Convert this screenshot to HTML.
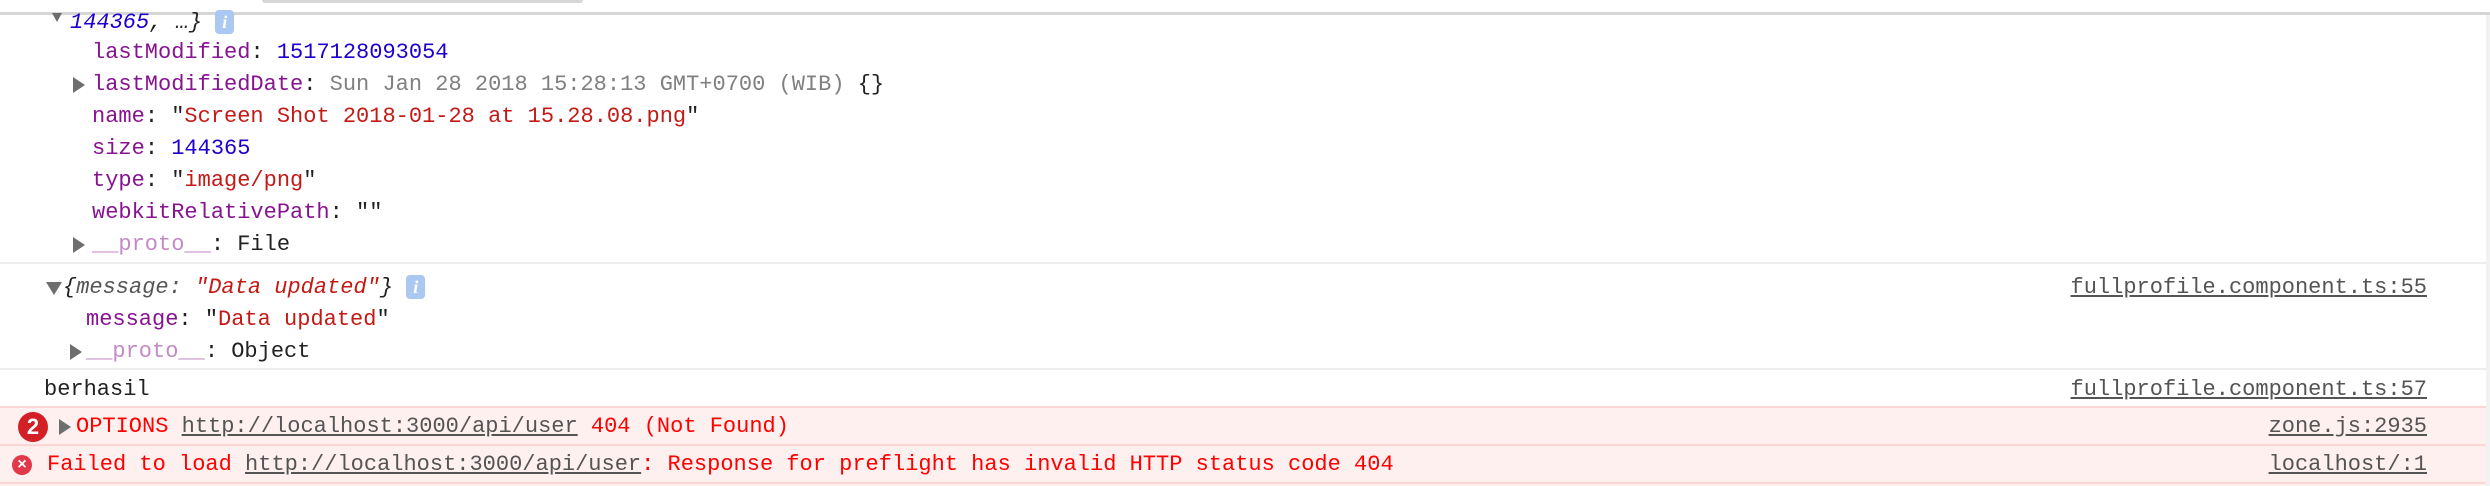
<!DOCTYPE html>
<html><head><meta charset="utf-8"><style>
body{margin:0;width:2490px;height:486px;background:#fff;position:relative;overflow:hidden;font-family:"Liberation Mono",monospace;font-size:22px;color:#222}
.l{position:absolute;white-space:pre;line-height:32px;height:32px}
.p{color:#881391}.n{color:#1c00cf}.s{color:#c41a16}.g{color:#808080}.pp{color:#c38bc6}
.r{color:#f00}
.u{text-decoration:underline;color:#545454}
.car{position:absolute;width:0;height:0;border-top:8px solid transparent;border-bottom:8px solid transparent;border-left:12px solid #6e6e6e}
.cd{position:absolute;width:0;height:0;border-left:8px solid transparent;border-right:8px solid transparent;border-top:13px solid #6e6e6e}
.info{display:inline-block;width:19px;height:24px;background:#abc8f3;border-radius:4px;color:#fff;font-style:italic;font-size:18px;line-height:24px;text-align:center;vertical-align:middle;font-family:"Liberation Serif",serif;font-weight:bold}
.sep{position:absolute;left:0;width:2486px;height:2px;background:#eeeeee}
.rt{position:absolute;right:63px;white-space:pre;line-height:32px}
</style></head><body>
<div style="position:absolute;left:0;top:12px;width:2490px;height:3px;background:#d6d6d6"></div>
<div style="position:absolute;left:262px;top:0;width:321px;height:3px;background:#d6d6d6;border-radius:0 0 3px 3px"></div>
<div style="position:absolute;left:2486px;top:15px;width:4px;height:471px;background:#f2f2f2"></div>

<div class="cd" style="left:52px;top:13px;border-left-width:5px;border-right-width:5px;border-top-width:9px"></div>
<div class="l" style="left:70px;top:7px"><i class="n">144365</i><i>, …}</i> <span class="info">i</span></div>
<div class="l" style="left:92px;top:37px"><span class="p">lastModified</span>: <span class="n">1517128093054</span></div>
<div class="car" style="left:73px;top:77px"></div>
<div class="l" style="left:92px;top:69px"><span class="p">lastModifiedDate</span>: <span class="g">Sun Jan 28 2018 15:28:13 GMT+0700 (WIB)</span> {}</div>
<div class="l" style="left:92px;top:101px"><span class="p">name</span>: "<span class="s">Screen Shot 2018-01-28 at 15.28.08.png</span>"</div>
<div class="l" style="left:92px;top:133px"><span class="p">size</span>: <span class="n">144365</span></div>
<div class="l" style="left:92px;top:165px"><span class="p">type</span>: "<span class="s">image/png</span>"</div>
<div class="l" style="left:92px;top:197px"><span class="p">webkitRelativePath</span>: ""</div>
<div class="car" style="left:73px;top:237px"></div>
<div class="l" style="left:92px;top:229px"><span class="pp">__proto__</span>: File</div>
<div class="sep" style="top:262px"></div>

<div class="cd" style="left:46px;top:282px"></div>
<div class="l" style="left:63px;top:272px"><i>{</i><i style="color:#555">message: </i><i class="s">"Data updated"</i><i>}</i> <span class="info">i</span></div>
<div class="rt u" style="top:272px">fullprofile.component.ts:55</div>
<div class="l" style="left:86px;top:304px"><span class="p">message</span>: "<span class="s">Data updated</span>"</div>
<div class="car" style="left:70px;top:344px"></div>
<div class="l" style="left:86px;top:336px"><span class="pp">__proto__</span>: Object</div>
<div class="sep" style="top:368px"></div>

<div class="l" style="left:44px;top:374px">berhasil</div>
<div class="rt u" style="top:374px">fullprofile.component.ts:57</div>

<div style="position:absolute;left:0;top:406px;width:2486px;height:78px;background:#fff0f0;border-top:2px solid #ffd6d6"></div>
<div style="position:absolute;left:0;top:444px;width:2486px;height:2px;background:#ffd6d6"></div>
<div style="position:absolute;left:0;top:482px;width:2486px;height:2px;background:#ffd6d6"></div>

<div style="position:absolute;left:18px;top:412px;width:30px;height:30px;border-radius:50%;background:#d32026;color:#fff;font-family:'Liberation Sans',sans-serif;font-weight:bold;font-size:22px;line-height:30px;text-align:center">2</div>
<div class="car" style="left:59px;top:419px"></div>
<div class="l" style="left:76px;top:411px"><span class="r">OPTIONS </span><span class="u">http://localhost:3000/api/user</span><span class="r"> 404 (Not Found)</span></div>
<div class="rt u" style="top:411px">zone.js:2935</div>

<div style="position:absolute;left:12px;top:455px;width:20px;height:20px;border-radius:50%;background:#e0394a;color:#fff;font-family:'Liberation Sans',sans-serif;font-weight:bold;font-size:16px;line-height:20px;text-align:center">×</div>
<div class="l" style="left:47px;top:449px"><span class="r">Failed to load </span><span class="u">http://localhost:3000/api/user</span><span class="r">: Response for preflight has invalid HTTP status code 404</span></div>
<div class="rt u" style="top:449px">localhost/:1</div>
</body></html>
